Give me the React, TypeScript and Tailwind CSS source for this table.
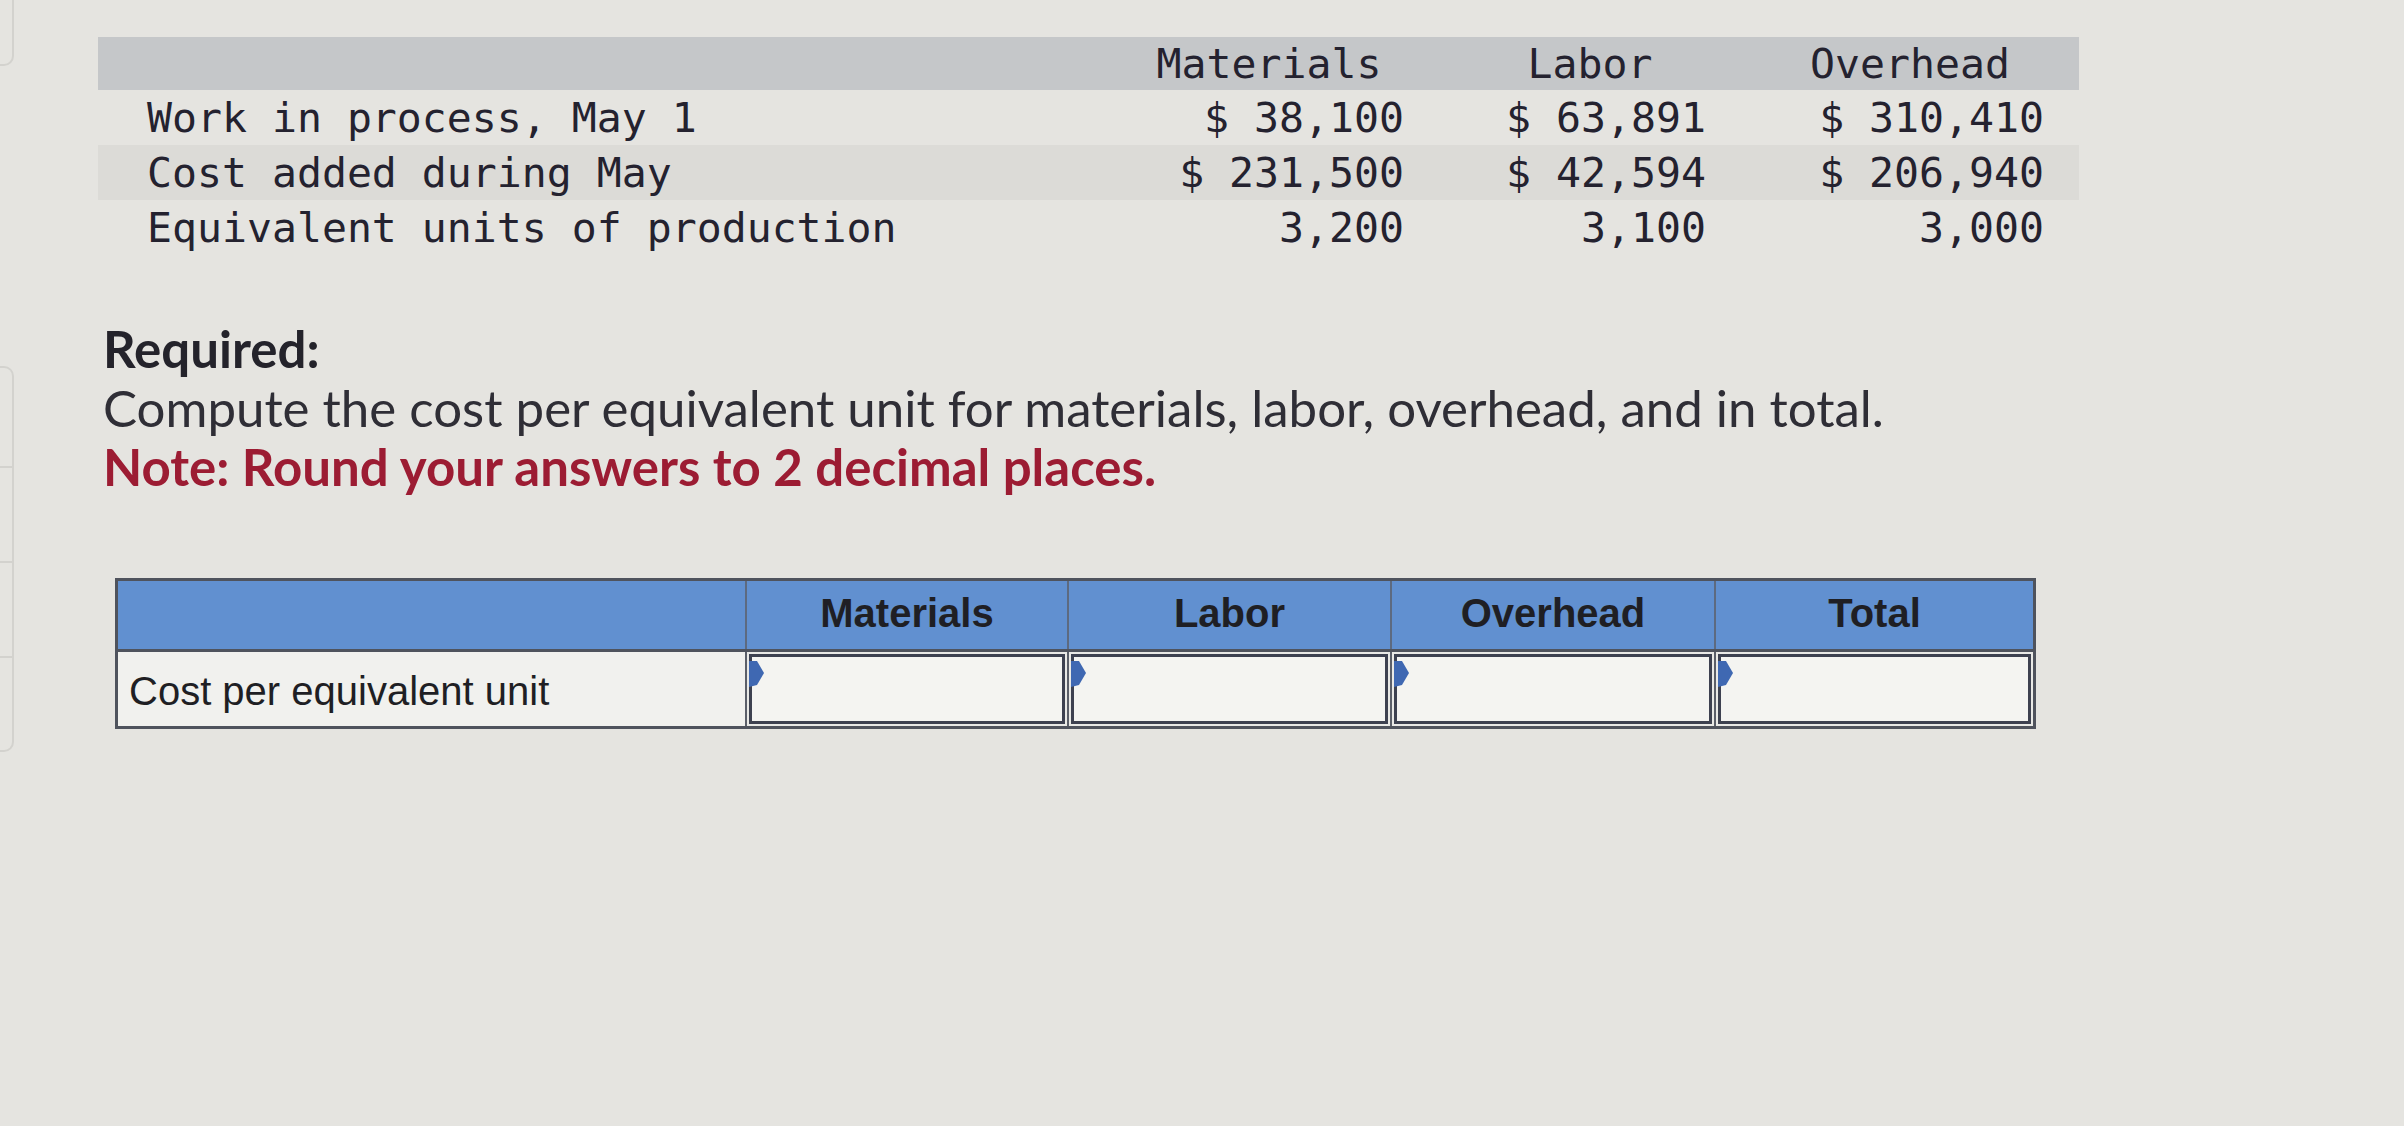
import React from 'react'

type Row = { label: string; values: string[]; shaded?: boolean }

const rows: Row[] = [
  { label: 'Work in process, May 1', values: ['$ 38,100', '$ 63,891', '$ 310,410'] },
  { label: 'Cost added during May', values: ['$ 231,500', '$ 42,594', '$ 206,940'], shaded: true },
  { label: 'Equivalent units of production', values: ['3,200', '3,100', '3,000'] },
]

const heads = ['Materials', 'Labor', 'Overhead']

const Flag = () => (
  <svg width="16" height="26" viewBox="0 0 16 26" className="block">
    <polygon points="0,0 8,0 15,12 8,24 0,26" fill="#3f68b2" />
  </svg>
)

const InputCell = () => (
  <div className="h-full border-l-2 border-[#5b5f69] bg-[#e9e9e6] p-[2px]">
    <div className="relative h-full border-[3px] border-[#3d4150] bg-[#f4f4f1]">
      <div className="absolute left-[-3px] top-[4px]">
        <Flag />
      </div>
    </div>
  </div>
)

export default function App() {
  return (
    <div className="flex min-h-[1126px] w-full bg-[#e5e4e0] font-['Lato',sans-serif]">
      <div className="flex w-[14px] shrink-0 flex-col">
        <div className="h-[66px] rounded-br-[10px] border-b-2 border-r-2 border-[#d3d2ce]" />
        <div className="mt-[300px] flex h-[386px] flex-col rounded-r-[10px] border-2 border-l-0 border-[#d3d2ce]">
          <div className="h-[100px] border-b-2 border-[#d3d2ce]" />
          <div className="h-[95px] border-b-2 border-[#d3d2ce]" />
          <div className="h-[95px] border-b-2 border-[#d3d2ce]" />
        </div>
      </div>

      <div className="flex-1 pl-[84px] pt-[37px]">
        {/* given data */}
        <div className="w-[1981px] font-['DejaVu_Sans_Mono',monospace] text-[41.5px] text-[#24222f]">
          <div className="grid h-[53px] grid-cols-[1001px_340px_302px_338px] items-center bg-[#c5c7c9] leading-none">
            <div />
            {heads.map(h => (
              <div key={h} className="text-center">{h}</div>
            ))}
          </div>
          {rows.map(r => (
            <div
              key={r.label}
              className={`grid h-[55px] grid-cols-[1001px_340px_302px_338px] items-center leading-none ${r.shaded ? 'bg-[#dcdbd7]' : ''}`}
            >
              <div className="pl-[49px] whitespace-pre">{r.label}</div>
              {r.values.map((v, i) => (
                <div key={i} className="pr-[35px] text-right whitespace-pre">{v}</div>
              ))}
            </div>
          ))}
        </div>

        {/* instructions */}
        <div className="mt-[64px] pl-[5px] text-[51px] leading-[59px] text-[#2f2e36]">
          <div className="font-bold text-[#24232b]">Required:</div>
          <div>Compute the cost per equivalent unit for materials, labor, overhead, and in total.</div>
          <div className="font-bold text-[#9c1c33]">Note: Round your answers to 2 decimal places.</div>
        </div>

        {/* answer table */}
        <div className="ml-[17px] mt-[82px] w-[1921px] border-[3px] border-[#4f535d] font-['Liberation_Sans',Arial,sans-serif] text-[40px] text-[#1f1f24]">
          <div className="grid h-[71px] grid-cols-[627px_322px_323px_324px_319px] border-b-[3px] border-[#4f535d] bg-[#6190d0] font-bold leading-none">
            <div />
            {['Materials', 'Labor', 'Overhead', 'Total'].map(h => (
              <div key={h} className="flex items-center justify-center border-l-2 border-[#5d6a80] pb-[4px]">{h}</div>
            ))}
          </div>
          <div className="grid h-[74px] grid-cols-[627px_322px_323px_324px_319px] bg-[#f1f1ee]">
            <div className="flex items-center pl-[11px] pt-[4px] leading-none">Cost per equivalent unit</div>
            <InputCell />
            <InputCell />
            <InputCell />
            <InputCell />
          </div>
        </div>
      </div>
    </div>
  )
}
